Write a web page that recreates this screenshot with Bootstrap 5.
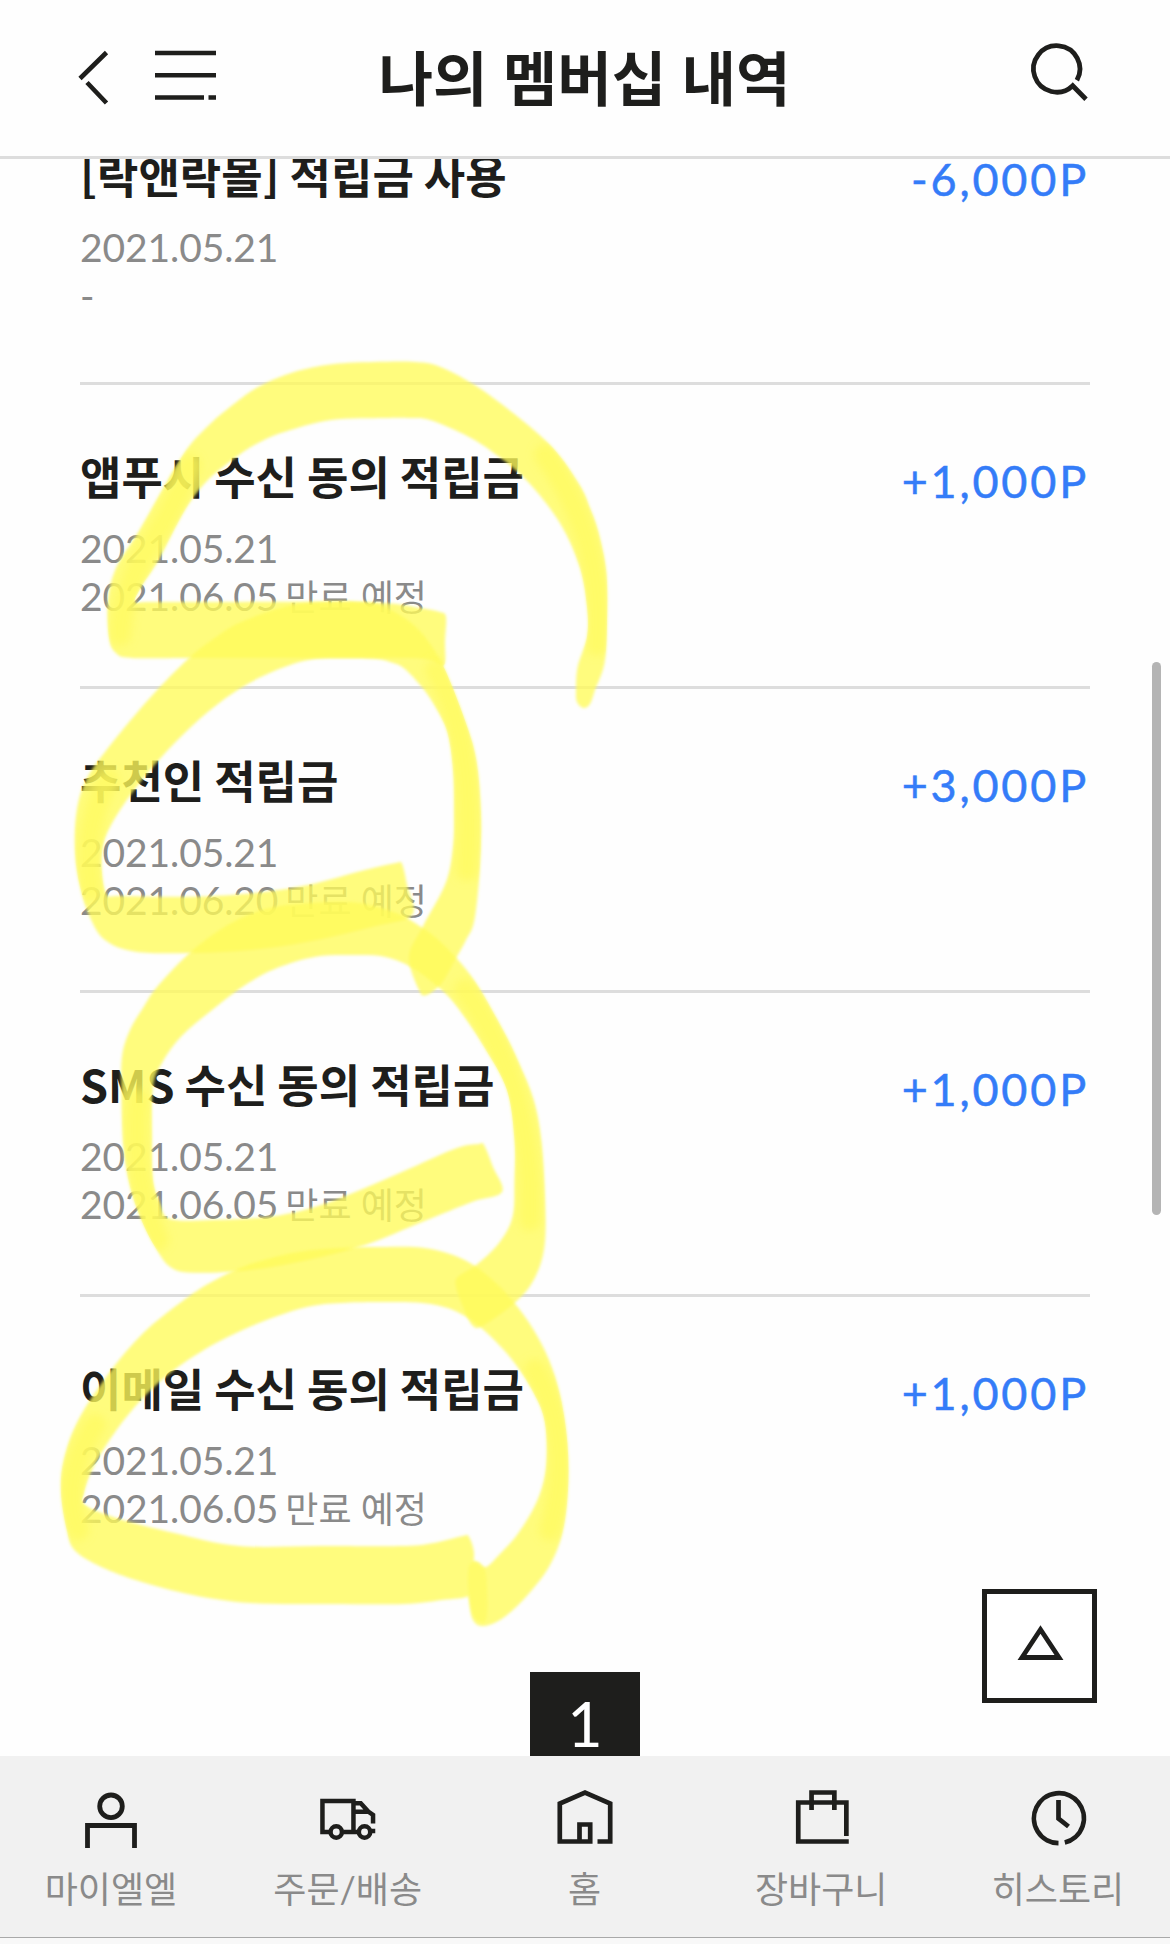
<!DOCTYPE html>
<html lang="ko">
<head>
<meta charset="utf-8">
<meta name="viewport" content="width=device-width, initial-scale=1">
<title>나의 멤버십 내역</title>
<link href="https://cdn.jsdelivr.net/npm/bootstrap@5.3.0/dist/css/bootstrap.min.css" rel="stylesheet">
<style>
  :root { --ink: #1e1e1c; --line: #ddd; --soft: #8a8a8a; --point: #347cf8; }
  body { font-family: Lato, "Noto Sans CJK KR", sans-serif; color: var(--ink); background: #fefefe; }
  .screen { width: 1170px; height: 1944px; }
  .topbar { height: 159px; border-bottom: 3px solid var(--line); padding: 0 79px 5px 78px; background: #fefefe; z-index: 2; }
  .topbar-side { width: 140px; }
  .topbar-title { font: 700 59.3px/80px "Noto Sans CJK KR", sans-serif; word-spacing: -1.5px; padding-bottom: 2px; }
  .history { padding: 0 80px; margin-top: -78px; }
  .entry { height: 304px; border-bottom: 3px solid var(--line); padding-top: 58px; }
  .entry:first-child { padding-top: 61px; }
  .entry:last-child { border-bottom: 0; }
  .entry-name { font: 700 45px/66px "Noto Sans CJK KR", sans-serif; word-spacing: -2.6px; }
  .entry-meta { font-size: 39px; line-height: 48px; letter-spacing: -.1px; color: var(--soft); margin-top: 15px; }
  .entry-meta .ko { font-size: 36px; margin-left: -3px; letter-spacing: 0; }
  .entry-points { font-size: 45px; line-height: 66px; letter-spacing: 2.8px; color: var(--point); padding-top: 5px; margin-right: 1px; -webkit-text-stroke: .5px var(--point); }
  .entry:first-child .entry-points { padding-top: 4px; }
  .page-now { width: 110px; height: 110px; margin-top: 71px; background: var(--ink); color: #fff; font-size: 61px; line-height: 104px; }
  .to-top { right: 73px; top: 1589px; width: 115px; height: 114px; border: 5px solid var(--ink); background: #fff; }
  .tabbar { height: 181px; background: #f1f1f1; padding: 30px 32px 0 31px; z-index: 2; }
  .tabbar a { width: 160px; color: var(--soft); font-size: 36px; line-height: 52px; }
  .tabbar svg { width: 60px; height: 60px; margin-bottom: 17px; }
  .home-edge { height: 7px; background: #f8f8f8; border-top: 1px solid #a9a9a9; z-index: 2; }
  .scroll-thumb { right: 9px; top: 662px; width: 9px; height: 553px; background: #b4b4b4; z-index: 3; }
  .marker { left: 0; top: 0; pointer-events: none; }
</style>
</head>
<body>
<div class="screen position-relative overflow-hidden d-flex flex-column">
  <header class="topbar position-relative d-flex align-items-center justify-content-between flex-shrink-0">
    <div class="topbar-side d-flex align-items-center">
      <svg width="140" height="60" viewBox="78 45.5 140 60" fill="none" stroke="#1e1e1c" stroke-width="4.6">
        <path d="M106.500 52L80 78M87 82L106.500 102.500"/>
        <path d="M155 52.500H216M155 74.700H216M155 97H204M208.500 97H216"/>
      </svg>
    </div>
    <h1 class="topbar-title m-0 text-nowrap">나의 멤버십 내역</h1>
    <div class="topbar-side d-flex justify-content-end">
      <svg width="60" height="60" viewBox="1031 45.5 60 60" overflow="visible" fill="none" stroke="#1e1e1c" stroke-width="4.8">
        <path d="M1076.900 79.800A23.200 23.200 0 1 0 1072.700 85.200L1086 98.700"/>
      </svg>
    </div>
  </header>

  <main class="flex-grow-1 overflow-hidden">
    <div class="history">
      <div class="entry d-flex justify-content-between">
        <div><div class="entry-name">[락앤락몰] 적립금 사용</div><div class="entry-meta">2021.05.21<br>-</div></div>
        <div class="entry-points">-6,000P</div>
      </div>
      <div class="entry d-flex justify-content-between">
        <div><div class="entry-name">앱푸시 수신 동의 적립금</div><div class="entry-meta">2021.05.21<br>2021.06.05 <span class="ko">만료 예정</span></div></div>
        <div class="entry-points">+1,000P</div>
      </div>
      <div class="entry d-flex justify-content-between">
        <div><div class="entry-name">추천인 적립금</div><div class="entry-meta">2021.05.21<br>2021.06.20 <span class="ko">만료 예정</span></div></div>
        <div class="entry-points">+3,000P</div>
      </div>
      <div class="entry d-flex justify-content-between">
        <div><div class="entry-name">SMS 수신 동의 적립금</div><div class="entry-meta">2021.05.21<br>2021.06.05 <span class="ko">만료 예정</span></div></div>
        <div class="entry-points">+1,000P</div>
      </div>
      <div class="entry d-flex justify-content-between">
        <div><div class="entry-name">이메일 수신 동의 적립금</div><div class="entry-meta">2021.05.21<br>2021.06.05 <span class="ko">만료 예정</span></div></div>
        <div class="entry-points">+1,000P</div>
      </div>
    </div>
    <div class="page-now mx-auto text-center">1</div>
  </main>

  <nav class="tabbar d-flex justify-content-between flex-shrink-0">
    <a class="text-decoration-none text-center text-nowrap d-flex flex-column align-items-center" href="#">
      <svg viewBox="81 1786 60 60" overflow="visible" fill="none" stroke="#1e1e1c" stroke-width="4.800"><circle cx="111" cy="1806.300" r="11.300"/><path d="M87.500 1848V1825.500H134.500V1848"/></svg>마이엘엘</a>
    <a class="text-decoration-none text-center text-nowrap d-flex flex-column align-items-center" href="#">
      <svg viewBox="317.75 1786 60 60" fill="none" stroke="#1e1e1c" stroke-width="4.500"><path d="M329 1832H322.200V1801H353.200V1832M343 1832H358M353.200 1803.200H360.500L368 1811.500L372.800 1815V1823.500M353.200 1811.800H368.500M371 1831H375"/><circle cx="336" cy="1832" r="5.700"/><circle cx="364.300" cy="1832" r="5.700"/></svg>주문/배송</a>
    <a class="text-decoration-none text-center text-nowrap d-flex flex-column align-items-center" href="#">
      <svg viewBox="554.500 1786 60 60" fill="none" stroke="#1e1e1c" stroke-width="4.700"><path d="M597 1841.500H609.700V1803.500L584.500 1792.500L559.300 1803.500V1841.500H589.700V1824.500H579V1841.500"/></svg>홈</a>
    <a class="text-decoration-none text-center text-nowrap d-flex flex-column align-items-center" href="#">
      <svg viewBox="791.25 1786 60 60" fill="none" stroke="#1e1e1c" stroke-width="4.700"><path d="M849 1841.500H798.500V1802.500H846.600V1836M811.800 1810V1792.500H834.600V1810"/></svg>장바구니</a>
    <a class="text-decoration-none text-center text-nowrap d-flex flex-column align-items-center" href="#">
      <svg viewBox="1028 1786 60 60" fill="none" stroke="#1e1e1c" stroke-width="4.700"><path d="M1058.500 1843.200A25 25 0 1 1 1064.800 1842.500M1058.500 1800V1818.500L1068.500 1826.500"/></svg>히스토리</a>
  </nav>
  <div class="home-edge flex-shrink-0"></div>

  <a class="to-top position-absolute d-flex align-items-center justify-content-center" href="#" aria-label="맨 위로">
    <svg width="50" height="44" viewBox="1015 1624 50 44" overflow="visible" fill="none" stroke="#1e1e1c" stroke-width="4.800"><path d="M1040.500 1629.500L1022 1657.500H1059Z"/></svg>
  </a>

  <svg class="marker position-absolute" width="1170" height="1944" viewBox="0 0 1170 1944">
    <defs>
      <filter id="soft" x="-5%" y="-5%" width="110%" height="110%"><feGaussianBlur stdDeviation="1.8"/></filter>
      <filter id="haze" filterUnits="userSpaceOnUse" x="0" y="300" width="700" height="1400"><feGaussianBlur stdDeviation="5"/></filter>
      <clipPath id="inside"></clipPath>
    </defs>
    <g id="strokes" fill="#fffb58" fill-opacity=".78"></g>
    <g clip-path="url(#inside)">
      <path filter="url(#haze)" fill="none" stroke="#fffa58" stroke-opacity=".6" stroke-width="22" stroke-linecap="round" stroke-linejoin="round"
        d="M120 635Q122 590 150 545T190 465M545 455Q605 540 597 645M91 890Q82 830 108 780M436 670Q475 740 467 870M158 1240Q132 1180 138 1100M465 990Q535 1090 530 1220M78 1530Q60 1480 95 1425M535 1370Q575 1440 550 1530"/>
    </g>
  </svg>
  <div class="scroll-thumb position-absolute rounded-pill"></div>
</div>

<script>
  // Outlines of the highlighter strokes, smoothed into closed curves.
  const outlines = [
    "446,617 445,640 444,665 430,660 400,658 300,658 193,658 132,658 116,653 109,638 108,600 116.500,567 139.500,530 181.600,457 208,426 239,400 260,386 285,375 310,368 338.500,363.500 384.500,361.700 415,362 438,366 473,384 513,413 553,448 579.600,485 590,508 598.700,533 606.400,573 607,623 604.500,663 595,690 590,704 583.500,708 577,702 576,690 577.700,666.700 587,636.700 587,606.700 579.600,566.700 560.500,524 530,484 499,456.700 468.600,436.700 430,420 410,418 384.500,418 331,420 285,431.700 260,442 239,455 208,480 185,510 158.600,560 141.400,586.700 135,602 150,602 220,602 308,601.700 384.500,603 420,608 440,612",
    "402,864 407,885 412,915 373,926.700 308,941.700 250.500,950 193,953 135.700,951.700 105,940 89.700,916.700 80,886.700 75,853 76.400,813 86,780 109,746.700 151,696.700 189,658 212,640 239,623 285,606.700 331,601.700 362,602 384.500,606.700 407.400,620 425,637 443.700,667 464.800,720 476.300,760 481,813 480,866.700 474.400,920 466,940 455,960 441.800,983 426.500,995 419,990 409,956.700 422.700,926.700 445.700,883 453,846.700 454,810 453,770 447.600,733 436,708 422.700,688 403.600,668 390,662 376.800,659 346,658 308,660 269.600,673 235,691.700 200.700,718 166,752 135.700,788 112.700,822 103,846 102,873 107,895 120,896 193,896.700 254,893 308,885 365,870 396,863",
    "484,1145 493,1167 502,1192 472.500,1201.700 422.700,1221.700 365,1245 308,1260 250.500,1270 193,1272.700 170,1266.700 155,1246.700 141.400,1220 130,1186.700 123.400,1146.700 121.500,1096.700 122,1056.700 130,1030 143,1008 158.600,985 193,950 231.400,923 269.600,908 315.500,902.700 357.600,902.700 396,913 422.700,928 445.700,946.700 474,980 503,1030 519,1063 533.700,1100 541.300,1140 545,1196.700 544.400,1246.700 533.700,1280 514.500,1303 484,1325 473,1326 463,1306.700 456,1286.700 458,1276.700 476.300,1265 499,1243 512.600,1216.700 514.500,1180 514.500,1140 507,1090 484,1046.700 457,1006.700 438,986.700 411,967 384.500,956.700 354,955 315.500,956.700 277,968 246.700,984 212,1010 181.600,1036 162.500,1062 153,1086.700 152,1136.700 153,1180 160,1203 170,1219 212,1220 269.600,1216.700 315.500,1206.700 365,1188 411,1168 457,1148 479,1144",
    "469,1537 474,1553 472,1575 470.500,1595 441.800,1600 403.600,1604 330,1604 250.500,1603 193,1595 135.700,1580 97.400,1565 74.400,1550 66.800,1530 61,1493 63.700,1460 78.300,1420 109,1373 143.300,1333 181.600,1301.700 212,1281.700 250.500,1264 300,1251.700 346,1247.700 385,1247 422.700,1247.700 453,1255 476,1266.700 497,1284 514.500,1303 533.700,1330 549,1360 560.500,1396.700 567.400,1443 568,1490 562.400,1533 549,1566.700 526,1596.700 503,1618 484,1626 473,1620 468.600,1596.700 467.800,1573 470,1562 477,1562 485.800,1567 499,1555 518.400,1533 537.500,1500 546,1466.700 545,1423 533.700,1393 510.700,1358 480,1326.700 453,1310 422.700,1303 385,1302 346,1302.700 308,1306.700 262,1321.700 216,1343 174,1370 143,1398 116.500,1430 93.600,1466.700 84,1493 85,1505 116.500,1518 174,1533 239,1546 320,1546 403.600,1546 434,1543 463,1536"
  ];
  const darkEnd = "468,1573 471,1563 478,1562 485,1570 487,1590 486,1620 475,1618 469,1597";
  const smooth = text => {
    const p = text.split(" ").map(s => s.split(",").map(Number)), n = p.length, k = 1 / 6;
    let d = `M${p[0]}`;
    for (let i = 0; i < n; i++) {
      const a = p[(i + n - 1) % n], b = p[i], c = p[(i + 1) % n], e = p[(i + 2) % n];
      d += `C${b[0] + (c[0] - a[0]) * k},${b[1] + (c[1] - a[1]) * k} ${c[0] - (e[0] - b[0]) * k},${c[1] - (e[1] - b[1]) * k} ${c}`;
    }
    return d + "Z";
  };
  const add = (text, parent, attrs) => {
    const el = document.createElementNS("http://www.w3.org/2000/svg", "path");
    el.setAttribute("d", smooth(text));
    for (const name in attrs) el.setAttribute(name, attrs[name]);
    document.getElementById(parent).append(el);
  };
  outlines.forEach(o => {
    add(o, "strokes", { filter: "url(#soft)" });
    add(o, "inside", {});
  });
  add(darkEnd, "strokes", { filter: "url(#soft)", "fill-opacity": ".5" });
</script>
<script src="https://cdn.jsdelivr.net/npm/bootstrap@5.3.0/dist/js/bootstrap.bundle.min.js"></script>
</body>
</html>
